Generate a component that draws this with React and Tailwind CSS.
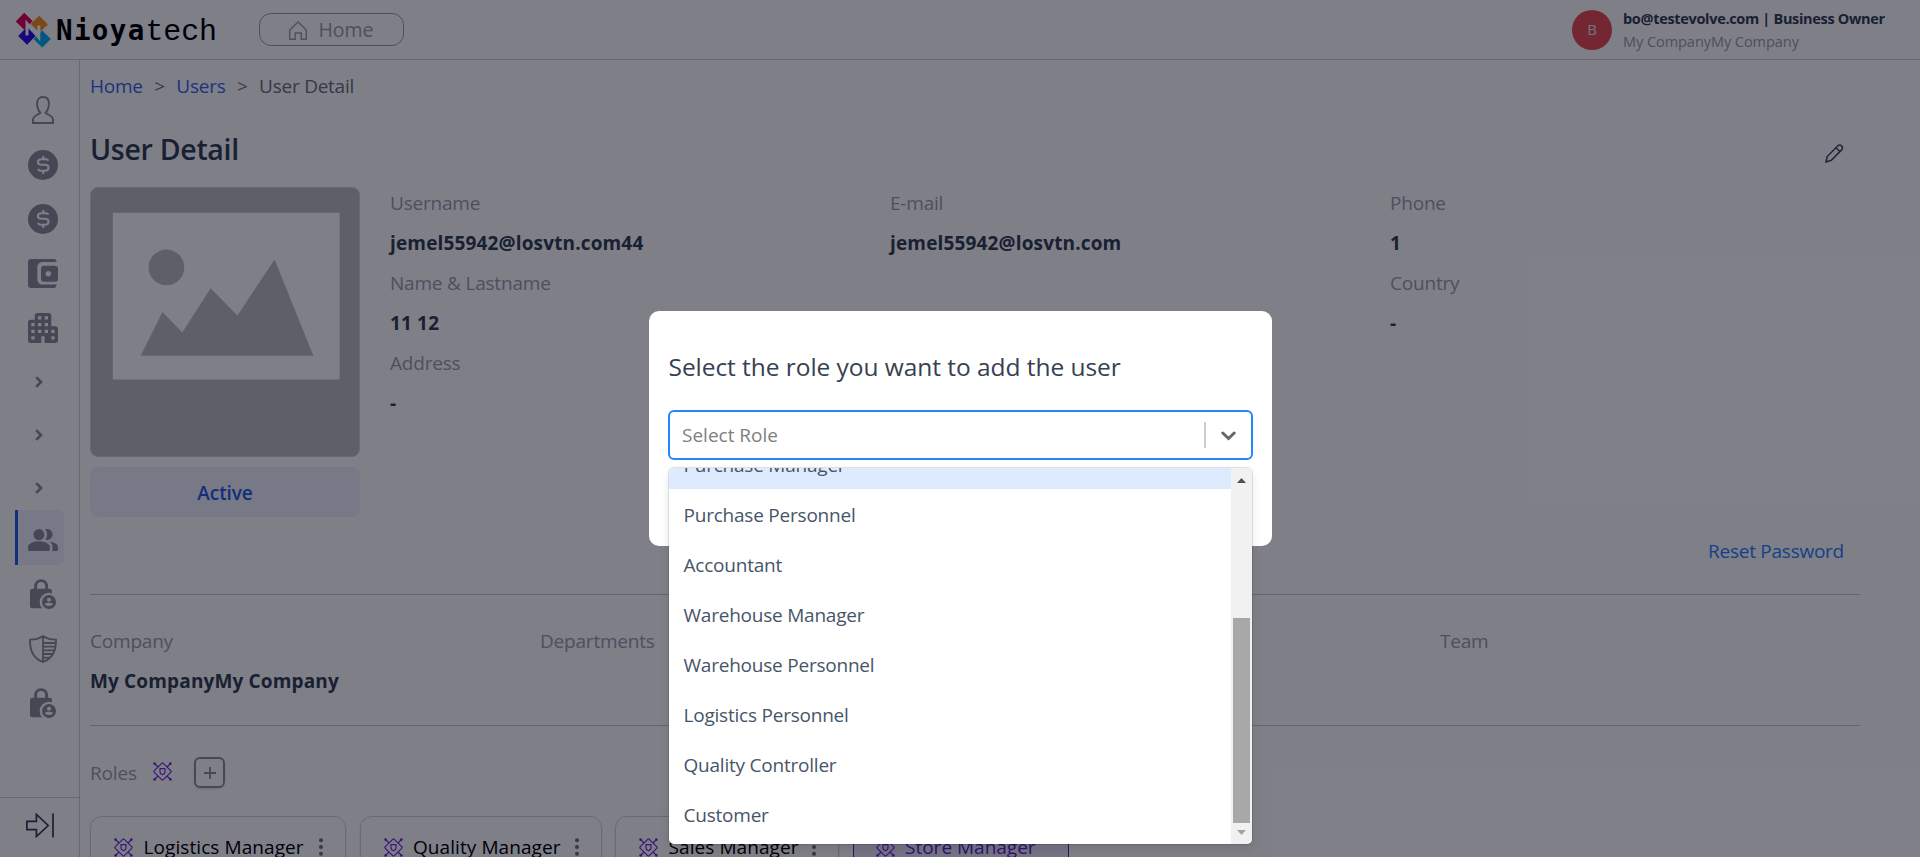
const ICON = 'text-[#8c8c99]';

function Logo() {
  return (
    <div className="flex w-[204px] shrink-0 items-center">
      <svg width="36" height="36" viewBox="0 0 36 36" className="shrink-0">
        <path d="M9.2 0.8 17.6 9 9.2 17.8 0.8 9.5z" fill="#e3005e" />
        <path d="M24.2 3.8 33 12.5 24.2 20.5 15.6 11.8z" fill="#f7931e" />
        <path d="M12 15 20.8 23.8 12 32.8 3.2 24z" fill="#2a0ee8" />
        <path d="M27.2 18.5 35.8 27 27.2 35.6 18.6 27z" fill="#00aeef" />
        <path d="M12 23.500V11.500L23.800 25.500V13.500" fill="none" stroke="#fff" strokeWidth="3" />
      </svg>
      <div className="flex items-baseline pt-[5px] pl-[5px] leading-none text-black">
        <span className="font-['DejaVu_Sans_Mono',monospace] text-[27.500px] font-bold tracking-[1.350px]">Nioya</span>
        <span className="font-['Liberation_Mono',monospace] text-[30px] tracking-[-0.200px]">tech</span>
      </div>
    </div>
  );
}

function HomeIcon() {
  return (
    <svg width="18" height="19" viewBox="0 0 18 19" fill="none" stroke="currentColor" strokeWidth="1.4">
      <path d="M9 1 17.3 9V18.2H12.3V12H6.2V18.2H.7V9z" />
    </svg>
  );
}

function UserIcon() {
  return (
    <svg width="22" height="28" viewBox="0 0 22 28" fill="none" stroke="currentColor" strokeWidth="1.9">
      <path d="M8.400 16.800C6 14 5.100 11 5.100 7.400C5.100 3.200 7.600 1 11 1S16.900 3.200 16.900 7.400C16.900 11 16 14 13.600 16.800C16.500 19.200 21 19.800 21 23.600V27H1V23.600C1 19.800 5.500 19.200 8.400 16.800z" />
    </svg>
  );
}

function DollarIcon() {
  return (
    <svg width="30" height="30" viewBox="0 0 30 30" fill="none">
      <circle cx="15" cy="15" r="15" fill="currentColor" />
      <path d="M20.300 10.800C20 9.800 19.300 9.200 18 9.200H13.200C8.800 9.200 8.800 14.700 13.200 14.700H16.800C21.800 14.700 21.800 20.700 16.800 20.700H12.500C11.300 20.700 10.500 20.200 10 19M15.300 6V9M15.300 21V24" stroke="#fff" strokeWidth="2.100" />
    </svg>
  );
}

function WalletIcon() {
  return (
    <svg width="30" height="29" viewBox="0 0 30 29" fill="currentColor">
      <path d="M3 0H26C27.600 0 28.400 1.200 28.600 3H15C11.500 3 9.300 5.200 9.300 8.500V20C9.300 23.500 11.500 25.500 15 25.500H28.600C28.400 27.500 27.600 29 26 29H3C1.200 29 0 27.800 0 26V3C0 1.200 1.200 0 3 0z" />
      <path fillRule="evenodd" d="M16 6.700H27C29 6.700 30 7.700 30 9.500V20C30 21.800 29 22.700 27 22.700H16C14 22.700 13 21.800 13 20V9.500C13 7.700 14 6.700 16 6.700zM20.300 12A2.700 2.700 0 1 0 20.300 17.400A2.700 2.700 0 1 0 20.300 12z" />
    </svg>
  );
}

function BuildingIcon() {
  return (
    <svg width="30" height="30" viewBox="0 0 30 30">
      <path d="M10 0H20.500C22.300 0 23.300 1 23.300 2.800V13.300H27.200C29 13.300 30 14.300 30 16.200V27.200C30 29 29 30 27.200 30H2.800C1 30 0 29 0 27.200V9.500C0 7.700 1 6.700 2.800 6.700H6.700V3C6.700 1 8 0 10 0z" fill="currentColor" />
      <path d="M10 3.300h3.300v3.300H10zM16.700 3.300H20v3.300h-3.300zM3.300 10h3.300v3.300H3.300zM10 10h3.300v3.300H10zM16.700 10H20v3.300h-3.300zM3.300 16.700h3.300V20H3.300zM10 16.700h3.300V20H10zM16.700 16.700H20V20h-3.300zM23.300 16.700h3.300V20h-3.300zM3.300 23.300h3.300v3.300H3.300zM23.300 23.300h3.300v3.300h-3.300zM13.300 23.300h3.300V30h-3.300z" fill="#fff" />
    </svg>
  );
}

function ChevronIcon() {
  return (
    <svg width="8" height="12" viewBox="0 0 8 12" fill="none" stroke="currentColor" strokeWidth="2.600">
      <path d="M1.200 1.200 6 6 1.200 10.800" />
    </svg>
  );
}

function PeopleIcon() {
  return (
    <svg width="30" height="22" viewBox="1 4 22 16" fill="currentColor">
      <circle cx="9" cy="8" r="4" />
      <path d="M16.670 13.130C18.040 14.060 19 15.320 19 17v2c0 .350-.060.690-.180 1H22c.550 0 1-.450 1-1v-2c0-2.180-3.570-3.470-6.330-3.870zM15 12c2.210 0 4-1.790 4-4s-1.790-4-4-4c-.470 0-.910.100-1.330.240C14.500 5.270 15 6.580 15 8s-.500 2.730-1.330 3.760c.420.140.860.240 1.330.240zM9 13c-2.670 0-8 1.340-8 4v2c0 .550.450 1 1 1h14c.550 0 1-.450 1-1v-2c0-2.660-5.330-4-8-4z" />
    </svg>
  );
}

function LockIcon() {
  return (
    <svg width="26" height="30" viewBox="0 0 26 30">
      <path d="M5.600 12V7.500C5.600 4 7.800 1.600 11.100 1.600S16.600 4 16.600 7.500V12" fill="none" stroke="currentColor" strokeWidth="2.900" />
      <rect y="9.700" width="22" height="19.500" rx="2.500" fill="currentColor" />
      <circle cx="19" cy="23" r="9.300" fill="#fff" />
      <circle cx="19" cy="23" r="7" fill="currentColor" />
      <circle cx="19" cy="20.800" r="2" fill="#fff" />
      <path d="M15 25.200C15.500 23.300 22.500 23.300 23 25.200C22 27.500 16 27.500 15 25.200z" fill="#fff" />
    </svg>
  );
}

function ShieldIcon() {
  return (
    <svg width="28" height="28" viewBox="0 0 28 28" fill="none" stroke="currentColor" strokeWidth="1.800">
      <path d="M14 1C10 3.600 5.500 4.800 1 4.700C.8 15 3.500 23.500 14 27C24.500 23.500 27.200 15 27 4.700C22.500 4.800 18 3.600 14 1zM14 1V27M14 8H26.500M14 11.700H26M14 15.300H25.500M14 19H23.500M14 22.600H21" />
    </svg>
  );
}

function ExpandIcon() {
  return (
    <svg width="28" height="25" viewBox="0 0 28 25" fill="none" stroke="currentColor" strokeWidth="1.700">
      <path d="M.9 8.300H10.400V1.500L22.200 12.500 10.400 23.500V16.700H.9zM27 .5V24.500" />
    </svg>
  );
}

function RoleIcon() {
  return (
    <svg width="19" height="19" viewBox="0 0 19 19" fill="none" stroke="#6f2fe0" strokeWidth="1.200" strokeLinejoin="round" className="shrink-0">
      <path d="M8.700 1.300Q9.500.5 10.300 1.300L17.700 8.700Q18.500 9.500 17.700 10.300L10.300 17.700Q9.500 18.500 8.700 17.700L1.300 10.300Q.5 9.500 1.300 8.700z" />
      <path d="M1.500 1.500 5 5M17.500 1.500 14 5M1.500 17.500 5 14M17.500 17.500 14 14" />
      <g fill="#6f2fe0" stroke="none">
        <circle cx="1.600" cy="1.600" r="1.300" />
        <circle cx="17.400" cy="1.600" r="1.300" />
        <circle cx="1.600" cy="17.400" r="1.300" />
        <circle cx="17.400" cy="17.400" r="1.300" />
      </g>
      <path d="M7 6.700H12V10C12 11.600 11 12.200 9.500 12.800C8 12.200 7 11.600 7 10z" />
    </svg>
  );
}

function PencilIcon() {
  return (
    <svg width="19" height="19" viewBox="0 0 19 19" fill="none" stroke="#3f4b61" strokeWidth="1.500">
      <path d="M1 18 2.200 12.500 12.600 2C15.400-.6 19 3 16.600 5.900L6.300 16.300zM11 3.700 15 7.700" />
    </svg>
  );
}

function MoreDots() {
  return (
    <svg width="4" height="18" viewBox="0 0 4 18" fill="#6b7280" className="shrink-0">
      <circle cx="2" cy="2.300" r="2" />
      <circle cx="2" cy="9" r="2" />
      <circle cx="2" cy="15.700" r="2" />
    </svg>
  );
}

function Header() {
  return (
    <header className="flex h-[60px] shrink-0 items-center border-b border-[#cdd0db] pl-[15px]">
      <Logo />
      <button className="ml-[40px] flex h-[33px] w-[145px] items-center justify-center gap-[11px] rounded-[12px] border border-gray-400 pt-px text-[19.500px] text-gray-400">
        <HomeIcon />
        Home
      </button>
      <div className="ml-auto flex w-[348px] items-center gap-[11px]">
        <div className="flex size-[40px] items-center justify-center rounded-full bg-[#e84e54] text-[15px] text-gray-200">B</div>
        <div className="whitespace-nowrap text-[14.500px] leading-[23px]">
          <div className="font-bold tracking-[-0.320px] text-[#334155]">bo@testevolve.com | Business Owner</div>
          <div className="tracking-[-0.050px] text-gray-400">My CompanyMy Company</div>
        </div>
      </div>
    </header>
  );
}

function Sidebar() {
  return (
    <aside className={`flex w-[80px] shrink-0 flex-col border-r border-[#cdd0db] ${ICON}`}>
      <nav className="flex h-[737px] flex-col pt-[23px] pl-[15px]">
        {[UserIcon, DollarIcon, DollarIcon, WalletIcon, BuildingIcon].map((Icon, i) => (
          <div key={i} className="flex h-[54.500px] w-[56px] shrink-0 items-center justify-center"><Icon /></div>
        ))}
        {[0, 1, 2].map((i) => (
          <div key={i} className="flex h-[53px] w-[49px] shrink-0 items-center pl-[19.500px]"><ChevronIcon /></div>
        ))}
        <div className="-mt-[4.500px] mb-[2px] flex h-[55px] w-[49px] shrink-0 items-center rounded-r-md border-l-[3px] border-[#2563eb] bg-[#eef3fe] pt-[5px] pl-[10px]"><PeopleIcon /></div>
        {[LockIcon, ShieldIcon, LockIcon].map((Icon, i) => (
          <div key={i} className="flex h-[54.500px] w-[56px] shrink-0 items-center justify-center"><Icon /></div>
        ))}
      </nav>
      <div className="flex flex-1 justify-center border-t border-[#cdd0db] pt-[15px] text-[#334155]"><ExpandIcon /></div>
    </aside>
  );
}

function Photo() {
  return (
    <svg width="270" height="270" viewBox="0 0 270 270" className="rounded-lg border border-[#d1d1d6] bg-[#bebec1]">
      <path d="M22 25H250.500V193H22z" fill="#fff" />
      <g fill="#bebec1">
        <circle cx="76" cy="80" r="18" />
        <path d="M50 169 72 125 92 145.500 120.500 101 147.500 128.500 185 72 224 169z" />
      </g>
    </svg>
  );
}

function Field({ label, value }) {
  return (
    <div className="flex flex-col gap-[10px]">
      <div className="h-[30px] tracking-[-0.200px] text-gray-400">{label}</div>
      <div className="h-[30px] font-bold tracking-[0.150px] text-[#334155]">{value}</div>
    </div>
  );
}

const ROLES = [
  { name: 'Logistics Manager', width: 'w-[256px]' },
  { name: 'Quality Manager', width: 'w-[242px]' },
  { name: 'Sales Manager', width: 'w-[224px]' },
];

function Content() {
  return (
    <main className="flex min-w-0 flex-1 flex-col pl-[10px] text-[19px] leading-[30px]">
      <div className="flex h-[52px] shrink-0 items-center gap-[11.500px] tracking-[-0.250px] text-gray-500">
        <span className="text-[#3a66ee]">Home</span>
        <span>&gt;</span>
        <span className="text-[#3a66ee]">Users</span>
        <span>&gt;</span>
        <span>User Detail</span>
      </div>
      <div className="flex h-[75px] shrink-0 items-center justify-between pt-[8px] pr-[76px]">
        <h1 className="pb-[10px] text-[28.500px] font-semibold tracking-[-0.300px] text-[#334155]">User Detail</h1>
        <PencilIcon />
      </div>
      <section className="flex h-[408px] w-[1770px] shrink-0 border-b border-[#c8cad6]">
        <div className="flex w-[270px] flex-col gap-[10px]">
          <Photo />
          <div className="flex h-[50px] items-center justify-center rounded-lg bg-[#eef3fe] pt-[2px] font-semibold tracking-[-0.100px] text-[#2a5ce8]">Active</div>
        </div>
        <div className="ml-[30px] flex flex-1 flex-col pt-px">
          <div className="grid grid-cols-[500px_500px_1fr] gap-y-[10px]">
            <Field label="Username" value="jemel55942@losvtn.com44" />
            <Field label="E-mail" value="jemel55942@losvtn.com" />
            <Field label="Phone" value="1" />
            <Field label="Name & Lastname" value="11 12" />
            <Field label="" value="" />
            <Field label="Country" value="-" />
            <Field label="Address" value="-" />
          </div>
          <div className="mt-[118px] pr-[16px] text-right tracking-[-0.250px] text-blue-500">Reset Password</div>
        </div>
      </section>
      <section className="grid h-[131px] w-[1770px] shrink-0 grid-cols-[450px_450px_450px_1fr] border-b border-[#c8cad6] pt-[31px]">
        <Field label="Company" value="My CompanyMy Company" />
        <Field label="Departments" value="" />
        <Field label="" value="" />
        <Field label="Team" value="" />
      </section>
      <section className="flex h-[90px] shrink-0 items-center pt-[3px]">
        <span className="w-[62.500px] tracking-[-0.150px] text-gray-400">Roles</span>
        <span className="pb-[3px]"><RoleIcon /></span>
        <button className="ml-[22.500px] flex size-[31px] items-center justify-center rounded-md border-2 border-[#8f909e] shadow">
          <svg width="12" height="12" viewBox="0 0 12 12" stroke="#8f909e" strokeWidth="1.800"><path d="M6 0V12M0 6H12" /></svg>
        </button>
      </section>
      <section className="flex shrink-0 gap-[13.500px] text-black">
        {ROLES.map((role) => (
          <div key={role.name} className={`flex h-[62px] shrink-0 items-center rounded-xl border border-gray-300 pr-[22px] pl-[23px] shadow-sm ${role.width}`}>
            <RoleIcon />
            <span className="ml-[10.500px] flex-1 pb-px tracking-[0.080px] whitespace-nowrap">{role.name}</span>
            <MoreDots />
          </div>
        ))}
        <div className="flex h-[62px] w-[216px] shrink-0 items-center rounded-xl border border-[#5028c8] bg-[#ede6fb] pl-[22px] text-[#5b2bc8]">
          <RoleIcon />
          <span className="ml-[10.500px] pb-px whitespace-nowrap">Store Manager</span>
        </div>
      </section>
    </main>
  );
}

const OPTIONS = ['Purchase Personnel', 'Accountant', 'Warehouse Manager', 'Warehouse Personnel', 'Logistics Personnel', 'Quality Controller', 'Customer'];

function RoleMenu() {
  return (
    <div className="absolute top-[56px] -left-px flex h-[376px] w-[583px] overflow-hidden rounded-[5px] bg-white shadow-[0_0_0_1px_rgba(0,0,0,0.1),0_4px_11px_rgba(0,0,0,0.1)]">
      <div className="flex flex-1 flex-col justify-end overflow-hidden pb-[5px] text-[19px] leading-[30px] tracking-[-0.220px] text-[#475569]">
        <div className="flex h-[50px] shrink-0 items-center bg-[#deebff] px-[15px] pt-[2px]">Purchase Manager</div>
        {OPTIONS.map((name) => (
          <div key={name} className="flex h-[50px] shrink-0 items-center px-[15px] pt-[2px]">{name}</div>
        ))}
      </div>
      <div className="flex w-[21px] flex-col items-center bg-[#f1f1f1]">
        <svg width="9" height="5" viewBox="0 0 9 5" fill="#505050" className="mt-[10px]"><path d="M0 5 4.500 0 9 5z" /></svg>
        <div className="mt-[135px] h-[205px] w-[17px] bg-[#a8a8a8]" />
        <svg width="9" height="5" viewBox="0 0 9 5" fill="#a3a3a3" className="mt-[7px]"><path d="M0 0H9L4.500 5z" /></svg>
      </div>
    </div>
  );
}

function RoleDialog() {
  return (
    <div className="absolute inset-0 flex items-center justify-center bg-[#000010]/50">
      <div className="flex h-[235px] w-[623px] flex-col rounded-[10px] bg-white px-[19px] pt-[37px]">
        <h2 className="h-[62px] pl-px text-[24.500px] leading-[38px] font-medium tracking-[-0.050px] whitespace-nowrap text-[#374151]">Select the role you want to add the user</h2>
        <div className="relative flex h-[50px] items-center rounded-[6px] border-2 border-[#2684ff] text-[19px]">
          <span className="flex-1 pt-px pl-[12.500px] text-[#808080]">Select Role</span>
          <span className="h-[26px] w-[2px] bg-[#ccc]" />
          <span className="flex w-[45px] justify-center pt-px">
            <svg width="15" height="10" viewBox="0 0 15 10" fill="none" stroke="#666" strokeWidth="3" strokeLinecap="round"><path d="M1.800 2 7.500 7.500 13.200 2" /></svg>
          </span>
          <RoleMenu />
        </div>
      </div>
    </div>
  );
}

export default function App() {
  return (
    <div className="relative flex h-[857px] w-full flex-col overflow-hidden bg-white font-['Open_Sans',sans-serif]">
      <Header />
      <div className="flex min-h-0 flex-1">
        <Sidebar />
        <Content />
      </div>
      <RoleDialog />
    </div>
  );
}
